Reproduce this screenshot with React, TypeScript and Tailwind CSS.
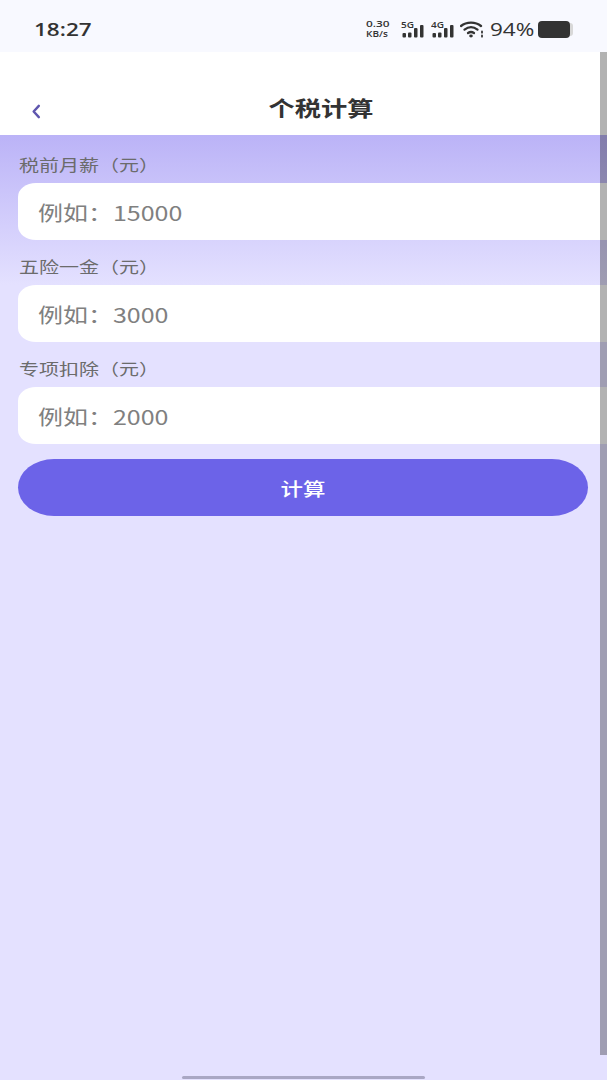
const cjk = "font-['Noto_Sans_CJK_SC',sans-serif]";
const open = "font-['Open_Sans',sans-serif]";
// the whole screen is stretched sideways, so text gets the same stretch
const wide = "inline-block origin-left scale-x-125 whitespace-nowrap";

function Signal({ label }: { label: string }) {
  return (
    <div className="relative h-[17px] w-[23px]">
      <span className={`${wide} ${open} absolute left-0 top-0 text-[8px] font-semibold leading-[7px] text-[#333]`}>{label}</span>
      <svg viewBox="0 0 23 17" className="absolute inset-0 h-full w-full" fill="#333">
        <rect x="1.5" y="12" width="3.5" height="4.5" rx="1" />
        <rect x="7" y="11.5" width="3.5" height="5" rx="1" />
        <rect x="13" y="7" width="3.5" height="9.5" rx="1" />
        <rect x="19" y="4" width="3.5" height="12.5" rx="1" />
      </svg>
    </div>
  );
}

function StatusBar() {
  return (
    <div className="flex h-[52px] shrink-0 items-center justify-between bg-[#f8f9ff] pl-[34px] pr-[34px] pt-[6px] text-[#333]">
      <span className={`${wide} ${open} text-[18px] font-semibold leading-none`}>18:27</span>
      <div className="flex items-center">
        <div className={`${open} mr-[9px] flex w-[26px] flex-col font-semibold`}>
          <span className={`${wide} text-[9.5px] leading-[10px]`}>0.30</span>
          <span className={`${wide} text-[8px] leading-[10px]`}>KB/s</span>
        </div>
        <Signal label="5G" />
        <div className="w-[7px]" />
        <Signal label="4G" />
        <svg viewBox="0 0 24 17" className="ml-[6px] h-[17px] w-[24px]" fill="none" stroke="#333" strokeWidth="2.3" strokeLinecap="round">
          <path d="M1 5C6.5 0.4 15.5 0.4 21 5" />
          <path d="M4.5 8.6C8.5 5.6 13.5 5.6 17.5 8.6" />
          <path d="M8 12C9.8 10.8 12.2 10.8 14 12" />
          <ellipse cx="11" cy="15" rx="1.8" ry="1.4" fill="#333" stroke="none" />
          <path d="M22 10.5v1.2M22 14.5v1.2" strokeWidth="1.8" />
        </svg>
        <span className={`${wide} ${open} ml-[6px] w-[43px] text-[18px] font-medium leading-none`}>94%</span>
        <div className="ml-[5px] flex items-center">
          <div className="h-[17px] w-[32px] rounded-[4px] bg-[#333]" />
          <div className="h-[13px] w-[3px] rounded-r-[3px] bg-[#d8d8d8]" />
        </div>
      </div>
    </div>
  );
}

function Field({ label, placeholder }: { label: string; placeholder: string }) {
  return (
    <div className="flex flex-col">
      <label className={`${cjk} h-[36px] pl-[19px] text-[16px] leading-[34px] text-[#6b6b6b]`}>
        <span className={wide}>{label}</span>
      </label>
      <div className={`${cjk} ml-[18px] flex h-[57px] w-[620px] shrink-0 items-center rounded-[18px/14px] bg-white pl-[20px] pt-[2px] text-[20px] text-[#808080]`}>
        <span className={wide}>{placeholder}</span>
      </div>
    </div>
  );
}

export default function App() {
  return (
    <div className="relative flex h-[1080px] w-[607px] flex-col overflow-hidden bg-[#e4e1ff]">
      <StatusBar />
      <header className="relative flex h-[83px] shrink-0 items-end justify-center bg-white pb-[13px] pl-[34px]">
        <svg viewBox="0 0 10 16" className="absolute bottom-[16px] left-[31px] h-[15px] w-[10px]" fill="none" stroke="#5f56ae" strokeWidth="2.6" strokeLinecap="round" strokeLinejoin="round">
          <path d="M8 2 2.5 8 8 14" />
        </svg>
        <h1 className={`${cjk} origin-center scale-x-125 text-[21px] font-bold leading-[30px] text-[#333]`}>个税计算</h1>
      </header>
      <main className="flex flex-col bg-[linear-gradient(#bbb3f7_0px,#e4e1ff_150px)] pt-[12px]">
        <div className="flex flex-col gap-[9px]">
          <Field label="税前月薪（元）" placeholder="例如：15000" />
          <Field label="五险一金（元）" placeholder="例如：3000" />
          <Field label="专项扣除（元）" placeholder="例如：2000" />
        </div>
        <button className={`${cjk} mx-[18px] mt-[15px] flex h-[57px] w-[570px] items-center justify-center rounded-[36px/28.5px] bg-[#6c63e8] pt-[1px] text-[18px] font-medium text-white`}>
          <span className="scale-x-125">计算</span>
        </button>
      </main>
      <div className="absolute bottom-[25px] right-0 top-[52px] w-[7px] bg-black/30" />
      <div className="absolute bottom-[1px] left-[182px] h-[3px] w-[243px] rounded-full bg-[#a9a7c4]" />
    </div>
  );
}
